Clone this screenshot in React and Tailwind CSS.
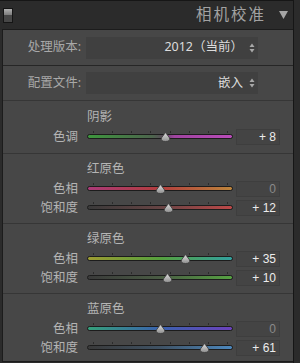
import React from 'react';

const sections = [
  {
    title: '阴影',
    first: true,
    rows: [
      { label: '色调', value: 8, track: 'bg-[linear-gradient(to_right,#3d963d,#4d644d_45%,#584a58_52%,#a044a0_60%,#b94cb9)]' }
    ]
  },
  {
    title: '红原色',
    rows: [
      { label: '色相', value: 0, track: 'bg-[linear-gradient(to_right,#aa3a78,#b23d3d_50%,#bd853c)]' },
      { label: '饱和度', value: 12, track: 'bg-[linear-gradient(to_right,#3a3a3a,#664444_50%,#bd4848)]' }
    ]
  },
  {
    title: '绿原色',
    rows: [
      { label: '色相', value: 35, track: 'bg-[linear-gradient(to_right,#9c9b32,#56a03e_50%,#32a09e)]' },
      { label: '饱和度', value: 10, track: 'bg-[linear-gradient(to_right,#3a3a3a,#4a5c44_50%,#56a242)]' }
    ]
  },
  {
    title: '蓝原色',
    last: true,
    rows: [
      { label: '色相', value: 0, track: 'bg-[linear-gradient(to_right,#35a07a,#3a62ae_50%,#6c42bc)]' },
      { label: '饱和度', value: 61, track: 'bg-[linear-gradient(to_right,#3a3a3a,#3f5264_50%,#4c88be)]' }
    ]
  }
];

const ticks = [4, 17, 30, 43, 57, 70, 83, 96];

const Thumb = () => (
  <svg width="11" height="10" viewBox="0 0 11 10">
    <defs>
      <linearGradient id="tg" x1="0" y1="0" x2="0" y2="1">
        <stop offset="0" stopColor="#e0e0e0" />
        <stop offset="1" stopColor="#8e8e8e" />
      </linearGradient>
    </defs>
    <path d="M5.5 0.5 L9.6 6 Q10.4 9.5 5.5 9.5 Q0.6 9.5 1.4 6 Z" fill="url(#tg)" stroke="#3a3a3a" strokeWidth="0.8" />
  </svg>
);

const UpDown = () => (
  <svg width="6" height="10" viewBox="0 0 6 10">
    <path d="M3 0.5 L5.5 4 L0.5 4 Z" fill="#a8a8a8" />
    <path d="M3 9.5 L5.5 6 L0.5 6 Z" fill="#a8a8a8" />
  </svg>
);

const SliderRow = ({ label, value, track }) => {
  const pct = (value + 100) / 2;
  const text = value === 0 ? '0' : value > 0 ? `+ ${value}` : `- ${-value}`;
  return (
    <div className="flex h-[19px] items-center">
      <div className="w-[75px] text-right text-[12.5px] leading-[19px] text-[#b4b4b4]">{label}</div>
      <div className="relative ml-[9px] h-[19px] w-[146px]">
        {ticks.map(t => (
          <div key={t} className="absolute top-[4px] h-[2px] w-px bg-[#2c2c2c]" style={{ left: `${t}%` }} />
        ))}
        <div className={`absolute left-0 right-0 top-[7px] h-[5px] rounded-full border border-[#1c1c1c] ${track}`} />
        <div className="absolute top-[5px]" style={{ left: `calc(${pct}% - 5.5px)` }}>
          <Thumb />
        </div>
      </div>
      <div className="ml-[3px] flex h-[16px] w-[44px] items-center justify-end border border-[#3e3e3e] bg-[#444444] pr-[3px]">
        <span className={`font-['Liberation_Sans',sans-serif] text-[12px] leading-none ${value === 0 ? 'text-[#8a8a8a]' : 'text-[#ececec]'}`}>
          {text}
        </span>
      </div>
    </div>
  );
};

const SelectRow = ({ label, value, border }) => (
  <div className={`flex items-center ${border ? 'h-[36px] border-b border-[#262626]' : 'h-[34px]'}`}>
    <div className="w-[78px] text-right text-[12.5px] text-[#a8a8a8]">{label}</div>
    <div className="ml-[5px] flex h-[22px] w-[172px] items-center justify-end gap-[6px] bg-[#404040] pr-[3px]">
      <span className="text-[12.5px] leading-none text-[#dcdcdc]">{value}</span>
      <UpDown />
    </div>
  </div>
);

export default function App() {
  return (
    <div className="h-[363px] w-[300px] overflow-hidden bg-[#2b2b2b] font-['Noto_Sans','Noto_Sans_CJK_SC',sans-serif]">
      <div className="flex h-[363px] w-[294px] flex-col border-r border-[#161616]">
        {/* header */}
        <div className="flex h-[29px] items-center border-t border-[#161616] pl-[3px] pr-[5px]">
          <div className="flex h-[15px] w-[10px] flex-col border border-[#151515]">
            <div className="h-[6px] bg-[linear-gradient(#b0b0b0,#7c7c7c)]" />
            <div className="flex-1 bg-[#474747]" />
          </div>
          <div className="ml-auto text-[15.5px] leading-none tracking-[2px] text-[#a2a2a2]">相机校准</div>
          <svg className="ml-[13px]" width="9" height="8" viewBox="0 0 9 8">
            <path d="M0 0 L9 0 L4.5 8 Z" fill="#a4a4a4" />
          </svg>
        </div>

        {/* panel */}
        <div className="ml-[2px] mb-[1px] flex-1 border-b border-l border-t border-[#1c1c1c] bg-[#474747]">
          <SelectRow label="处理版本:" value="2012（当前）" border />
          <SelectRow label="配置文件:" value="嵌入" />
          {sections.map(sec => (
            <div
              key={sec.title}
              className={`border-t border-[#363636] ${sec.first ? 'pt-[6px] pb-[7px]' : sec.last ? 'pt-[5px] pb-[4px]' : 'pt-[5px] pb-[6px]'}`}
            >
              <div className="h-[20px] pl-[84px] text-[12.5px] leading-[20px] text-[#b4b4b4]">{sec.title}</div>
              {sec.rows.map(r => (
                <SliderRow key={r.label} {...r} />
              ))}
            </div>
          ))}
        </div>
      </div>
    </div>
  );
}
